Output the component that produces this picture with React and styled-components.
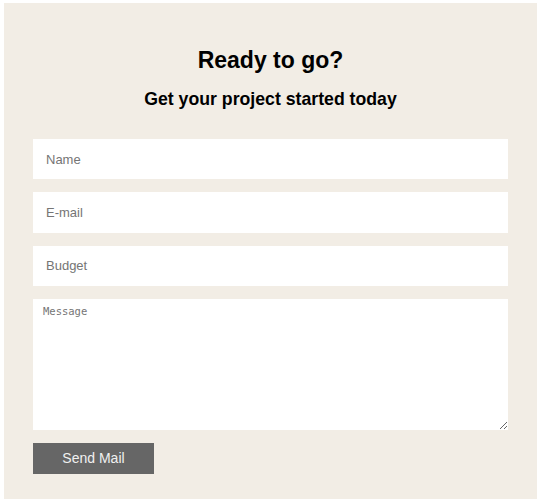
import React from 'react';
import styled, { createGlobalStyle } from 'styled-components';

const GlobalStyle = createGlobalStyle`
  html, body {
    margin: 0;
    background: #ffffff;
  }
  body {
    padding: 3px 1px 0 4px;
    font-family: "Liberation Sans", Arial, sans-serif;
  }
`;

const Panel = styled.section`
  background-color: #f2ede5;
  padding: 43px 29px 26px;
  box-sizing: border-box;
`;

const Title = styled.h2`
  margin: 0;
  font-size: 23px;
  line-height: 28px;
  font-weight: 700;
  color: #000;
  text-align: center;
`;

const Subtitle = styled.h3`
  margin: 14px 0 0;
  font-size: 17.7px;
  line-height: 22px;
  font-weight: 700;
  color: #000;
  text-align: center;
`;

const Form = styled.form`
  display: flex;
  flex-direction: column;
  gap: 13px;
  margin-top: 29px;
`;

const Field = styled.input`
  display: block;
  width: 100%;
  height: 40.33px;
  box-sizing: border-box;
  border: none;
  outline: none;
  background: #fff;
  padding: 0 13px;
  font-family: "Liberation Sans", Arial, sans-serif;
  font-size: 13px;
  color: #333;

  &::placeholder {
    color: #757575;
  }
`;

const Message = styled.textarea`
  display: block;
  width: 100%;
  height: 131px;
  box-sizing: border-box;
  border: none;
  outline: none;
  background: #fff;
  padding: 6px 10px;
  font-family: "DejaVu Sans Mono", monospace;
  font-size: 10.5px;
  color: #333;

  &::placeholder {
    color: #757575;
  }
`;

const SendButton = styled.button`
  width: 121px;
  height: 31px;
  border: none;
  background: #666666;
  color: #f0f0f0;
  font-family: "Liberation Sans", Arial, sans-serif;
  font-size: 14px;
  cursor: pointer;
  padding: 0;
`;

export default function App() {
  return (
    <>
      <GlobalStyle />
      <Panel>
        <Title>Ready to go?</Title>
        <Subtitle>Get your project started today</Subtitle>
        <Form onSubmit={(e) => e.preventDefault()}>
          <Field type="text" placeholder="Name" />
          <Field type="email" placeholder="E-mail" />
          <Field type="text" placeholder="Budget" />
          <Message placeholder="Message" />
          <div>
            <SendButton type="submit">Send Mail</SendButton>
          </div>
        </Form>
      </Panel>
    </>
  );
}
